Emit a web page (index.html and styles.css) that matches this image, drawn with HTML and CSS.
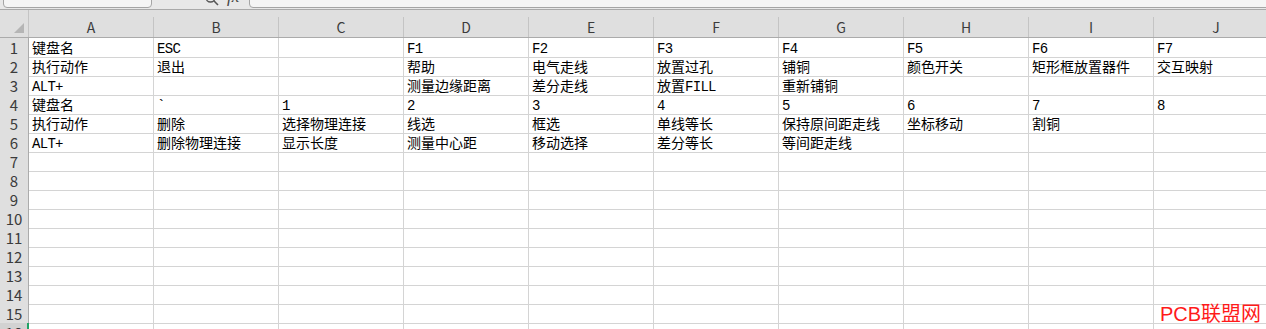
FILE: index.html
```html
<!DOCTYPE html>
<html lang="zh-CN">
<head>
    <meta charset="UTF-8">
    <title>快捷键.xlsx</title>
    <link rel="stylesheet" href="styles.css">
</head>
<body>
    <!-- formula bar, mostly scrolled off the top -->
    <div class="toolbar">
        <div class="namebox">K16</div>
        <div class="fx-tools">
            <svg class="zoom-icon" width="16" height="16" viewBox="0 0 16 16">
                <circle cx="6.5" cy="6.5" r="4.5" fill="none" stroke="#555" stroke-width="1.4"/>
                <line x1="9.8" y1="9.8" x2="14" y2="14" stroke="#555" stroke-width="1.6"/>
            </svg>
            <span class="fx">fx</span>
        </div>
        <div class="formula"></div>
    </div>

    <div class="sheet">
        <div class="row head">
            <div class="corner"><span class="tri"></span></div>
            <div class="col">A</div><div class="col">B</div><div class="col">C</div><div class="col">D</div><div class="col">E</div>
            <div class="col">F</div><div class="col">G</div><div class="col">H</div><div class="col">I</div><div class="col">J</div>
        </div>
        <div class="row">
            <div class="num">1</div>
            <div class="cell">键盘名</div><div class="cell"><span class="lat">ESC</span></div><div class="cell"></div><div class="cell"><span class="lat">F1</span></div><div class="cell"><span class="lat">F2</span></div>
            <div class="cell"><span class="lat">F3</span></div><div class="cell"><span class="lat">F4</span></div><div class="cell"><span class="lat">F5</span></div><div class="cell"><span class="lat">F6</span></div><div class="cell"><span class="lat">F7</span></div>
        </div>
        <div class="row">
            <div class="num">2</div>
            <div class="cell">执行动作</div><div class="cell">退出</div><div class="cell"></div><div class="cell">帮助</div><div class="cell">电气走线</div>
            <div class="cell">放置过孔</div><div class="cell">铺铜</div><div class="cell">颜色开关</div><div class="cell">矩形框放置器件</div><div class="cell">交互映射</div>
        </div>
        <div class="row">
            <div class="num">3</div>
            <div class="cell"><span class="lat">ALT+</span></div><div class="cell"></div><div class="cell"></div><div class="cell">测量边缘距离</div><div class="cell">差分走线</div>
            <div class="cell">放置<span class="lat">FILL</span></div><div class="cell">重新铺铜</div><div class="cell"></div><div class="cell"></div><div class="cell"></div>
        </div>
        <div class="row">
            <div class="num">4</div>
            <div class="cell">键盘名</div><div class="cell"><span class="lat">`</span></div><div class="cell"><span class="lat">1</span></div><div class="cell"><span class="lat">2</span></div><div class="cell"><span class="lat">3</span></div>
            <div class="cell"><span class="lat">4</span></div><div class="cell"><span class="lat">5</span></div><div class="cell"><span class="lat">6</span></div><div class="cell"><span class="lat">7</span></div><div class="cell"><span class="lat">8</span></div>
        </div>
        <div class="row">
            <div class="num">5</div>
            <div class="cell">执行动作</div><div class="cell">删除</div><div class="cell">选择物理连接</div><div class="cell">线选</div><div class="cell">框选</div>
            <div class="cell">单线等长</div><div class="cell">保持原间距走线</div><div class="cell">坐标移动</div><div class="cell">割铜</div><div class="cell"></div>
        </div>
        <div class="row">
            <div class="num">6</div>
            <div class="cell"><span class="lat">ALT+</span></div><div class="cell">删除物理连接</div><div class="cell">显示长度</div><div class="cell">测量中心距</div><div class="cell">移动选择</div>
            <div class="cell">差分等长</div><div class="cell">等间距走线</div><div class="cell"></div><div class="cell"></div><div class="cell"></div>
        </div>
        <div class="row">
            <div class="num">7</div>
            <div class="cell"></div><div class="cell"></div><div class="cell"></div><div class="cell"></div><div class="cell"></div>
            <div class="cell"></div><div class="cell"></div><div class="cell"></div><div class="cell"></div><div class="cell"></div>
        </div>
        <div class="row">
            <div class="num">8</div>
            <div class="cell"></div><div class="cell"></div><div class="cell"></div><div class="cell"></div><div class="cell"></div>
            <div class="cell"></div><div class="cell"></div><div class="cell"></div><div class="cell"></div><div class="cell"></div>
        </div>
        <div class="row">
            <div class="num">9</div>
            <div class="cell"></div><div class="cell"></div><div class="cell"></div><div class="cell"></div><div class="cell"></div>
            <div class="cell"></div><div class="cell"></div><div class="cell"></div><div class="cell"></div><div class="cell"></div>
        </div>
        <div class="row">
            <div class="num">10</div>
            <div class="cell"></div><div class="cell"></div><div class="cell"></div><div class="cell"></div><div class="cell"></div>
            <div class="cell"></div><div class="cell"></div><div class="cell"></div><div class="cell"></div><div class="cell"></div>
        </div>
        <div class="row">
            <div class="num">11</div>
            <div class="cell"></div><div class="cell"></div><div class="cell"></div><div class="cell"></div><div class="cell"></div>
            <div class="cell"></div><div class="cell"></div><div class="cell"></div><div class="cell"></div><div class="cell"></div>
        </div>
        <div class="row">
            <div class="num">12</div>
            <div class="cell"></div><div class="cell"></div><div class="cell"></div><div class="cell"></div><div class="cell"></div>
            <div class="cell"></div><div class="cell"></div><div class="cell"></div><div class="cell"></div><div class="cell"></div>
        </div>
        <div class="row">
            <div class="num">13</div>
            <div class="cell"></div><div class="cell"></div><div class="cell"></div><div class="cell"></div><div class="cell"></div>
            <div class="cell"></div><div class="cell"></div><div class="cell"></div><div class="cell"></div><div class="cell"></div>
        </div>
        <div class="row">
            <div class="num">14</div>
            <div class="cell"></div><div class="cell"></div><div class="cell"></div><div class="cell"></div><div class="cell"></div>
            <div class="cell"></div><div class="cell"></div><div class="cell"></div><div class="cell"></div><div class="cell"></div>
        </div>
        <div class="row">
            <div class="num">15</div>
            <div class="cell"></div><div class="cell"></div><div class="cell"></div><div class="cell"></div><div class="cell"></div>
            <div class="cell"></div><div class="cell"></div><div class="cell"></div><div class="cell"></div><div class="cell"></div>
        </div>
        <div class="row">
            <div class="num active">16</div>
            <div class="cell"></div><div class="cell"></div><div class="cell"></div><div class="cell"></div><div class="cell"></div>
            <div class="cell"></div><div class="cell"></div><div class="cell"></div><div class="cell"></div><div class="cell"></div>
        </div>
    </div>

    <div class="watermark">PCB联盟网</div>
</body>
</html>
```

FILE: styles.css
```css
/* spreadsheet view */
body {
    margin: 0;
    width: 1266px;
    height: 329px;
    overflow: hidden;
    position: relative;
    background: #ffffff;
    font-family: "Noto Sans CJK SC", sans-serif;
}

.toolbar {
    display: flex;
    align-items: flex-end;
    height: 9px;
    overflow: hidden;
    background: #e8e8e8;
    border-bottom: 1px solid #a9a9a9;
}

.namebox {
    flex: none;
    margin-left: 3px;
    margin-bottom: 1px;
    width: 147px;
    height: 24px;
    border: 1px solid #a5a5a5;
    border-radius: 0 0 4px 4px;
    background: #f5f5f5;
    text-align: center;
    font-family: "Liberation Mono", monospace;
    font-size: 13px;
    line-height: 14px;
    color: #333;
}

.fx-tools {
    flex: none;
    width: 97px;
    height: 9px;
    position: relative;
}

.zoom-icon {
    position: absolute;
    left: 52px;
    top: -9px;
}

.fx {
    position: absolute;
    left: 75px;
    top: -12px;
    font-family: "Liberation Serif", serif;
    font-style: italic;
    font-size: 17px;
    line-height: 17px;
    color: #444;
}

.formula {
    flex: 1;
    margin-right: -10px;
    margin-bottom: 1px;
    height: 24px;
    border: 1px solid #a5a5a5;
    border-radius: 0 0 0 4px;
    background: #f5f5f5;
}

.row {
    display: grid;
    grid-template-columns: 29px repeat(10, 125px);
    height: 19px;
}

.row.head {
    height: 27px;
    background: #dfdfdf;
    border-bottom: 1px solid #ababab;
}

.corner {
    position: relative;
    border-right: 1px solid #c4c4c4;
}

.tri {
    position: absolute;
    right: 4px;
    bottom: 4px;
    width: 0;
    height: 0;
    border-left: 10px solid transparent;
    border-bottom: 10px solid #b5b5b5;
}

.col {
    margin-top: 7px;
    border-right: 1px solid #c4c4c4;
    text-align: center;
    font-size: 14px;
    line-height: 20px;
    color: #3b3b3b;
}

.num {
    background: #dfdfdf;
    border-right: 1px solid #ababab;
    border-bottom: 1px solid #c8c8c8;
    text-align: center;
    font-size: 15px;
    line-height: 19px;
    color: #3b3b3b;
}

.num.active {
    background: #d2d2d2;
    border-right: 2px solid #21a366;
}

.cell {
    border-right: 1px solid #d4d4d4;
    border-bottom: 1px solid #d4d4d4;
    padding: 1px 0 0 3px;
    font-size: 14px;
    line-height: 17px;
    color: #000;
    white-space: nowrap;
    overflow: hidden;
}

/* latin text in the cells is the narrow monospace of the sheet font */
.lat {
    font-family: "Liberation Mono", monospace;
    font-size: 14px;
    letter-spacing: -0.7px;
}

.watermark {
    position: absolute;
    left: 1160px;
    top: 302px;
    font-family: "Liberation Sans", "Noto Sans CJK SC", sans-serif;
    font-size: 20px;
    line-height: 24px;
    color: #ff1a1a;
}
```
